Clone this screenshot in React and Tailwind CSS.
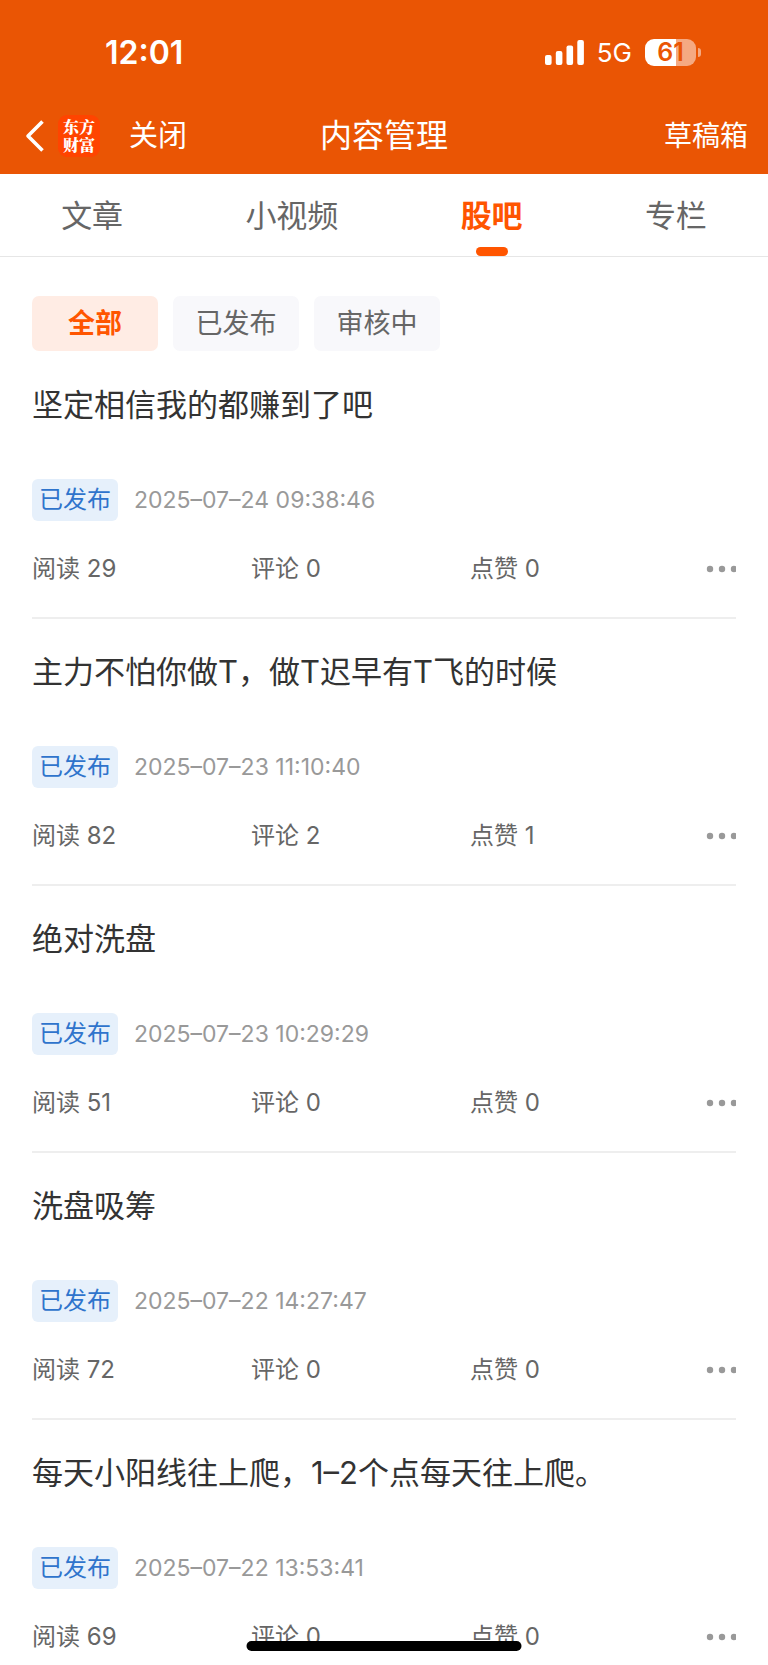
import React, { useState } from "react";

const TABS = ["文章", "小视频", "股吧", "专栏"];
const FILTERS = ["全部", "已发布", "审核中"];

const POSTS = [
  { title: "坚定相信我的都赚到了吧", time: "2025–07–24 09:38:46", reads: 29, comments: 0, likes: 0 },
  { title: "主力不怕你做T，做T迟早有T飞的时候", time: "2025–07–23 11:10:40", reads: 82, comments: 2, likes: 1 },
  { title: "绝对洗盘", time: "2025–07–23 10:29:29", reads: 51, comments: 0, likes: 0 },
  { title: "洗盘吸筹", time: "2025–07–22 14:27:47", reads: 72, comments: 0, likes: 0 },
  { title: "每天小阳线往上爬，1–2个点每天往上爬。", time: "2025–07–22 13:53:41", reads: 69, comments: 0, likes: 0 },
];

function SignalIcon() {
  return (
    <svg width="39" height="25" viewBox="0 0 39 25" fill="white" aria-hidden="true">
      <rect x="0" y="15" width="6.6" height="10" rx="2" />
      <rect x="10.8" y="11" width="6.6" height="14" rx="2" />
      <rect x="21.5" y="5.5" width="6.6" height="19.5" rx="2" />
      <rect x="32.3" y="0" width="6.6" height="25" rx="2" />
    </svg>
  );
}

function Battery() {
  return (
    <div className="flex items-center gap-[2px]">
      <div className="flex h-[27px] w-[51px] items-center justify-center rounded-[9px] bg-linear-to-r from-white from-61% to-[#f5a982] to-61% text-[25px] leading-none font-semibold text-[#ea5504]">
        61
      </div>
      <div className="h-[9px] w-[3px] rounded-r-full bg-[#f5a982]" />
    </div>
  );
}

function StatusBar() {
  return (
    <div className="flex h-[105px] items-center justify-between pr-[67px] pl-[105px]">
      <span className="text-[32px] leading-10 font-semibold">12:01</span>
      <div className="flex items-center gap-[13px]">
        <SignalIcon />
        <span className="text-[26px] leading-8">5G</span>
        <Battery />
      </div>
    </div>
  );
}

function NavBar() {
  return (
    <div className="grid h-[69px] grid-cols-[1fr_auto_1fr] items-center px-5 pb-2">
      <div className="flex items-center">
        <button type="button" aria-label="返回" className="pl-1">
          <svg width="20" height="32" viewBox="0 0 20 32" fill="none" stroke="white" strokeWidth="3.6" aria-hidden="true">
            <path d="M18.5 1.5 4 16 18.5 30.5" strokeLinejoin="round" />
          </svg>
        </button>
        <div className="ml-[14px] flex size-[42px] items-center justify-center rounded-[9px] bg-[#ff4400]">
          <span className="w-8 font-['Noto_Serif_CJK_SC','Noto_Sans_CJK_SC',serif] text-[16px] leading-[18px] font-black break-all">
            东方财富
          </span>
        </div>
        <button type="button" className="ml-[29px] text-[29px] leading-10">关闭</button>
      </div>
      <h1 className="text-[32px] leading-10">内容管理</h1>
      <button type="button" className="justify-self-end text-[28px] leading-10">草稿箱</button>
    </div>
  );
}

function Tabs({ active, onSelect }) {
  return (
    <nav className="flex h-[83px] shrink-0 justify-around border-b border-[#e6e6e6]">
      {TABS.map((tab) => (
        <button
          key={tab}
          type="button"
          onClick={() => onSelect(tab)}
          className={
            "relative h-full text-[31px] leading-[84px] " +
            (tab === active ? "font-bold text-[#ff5500]" : "text-[#666666]")
          }
        >
          {tab}
          {tab === active && (
            <span className="absolute bottom-0 left-1/2 h-[9px] w-8 -translate-x-1/2 rounded-full bg-[#ff5500]" />
          )}
        </button>
      ))}
    </nav>
  );
}

function Filters({ active, onSelect }) {
  return (
    <div className="flex gap-[15px] pt-[39px]">
      {FILTERS.map((filter) => (
        <button
          key={filter}
          type="button"
          onClick={() => onSelect(filter)}
          className={
            "h-[55px] w-[126px] rounded-[7px] text-[27px] leading-[55px] " +
            (filter === active ? "bg-[#ffece4] font-bold text-[#ff5500]" : "bg-[#f8f8fb] text-[#666666]")
          }
        >
          {filter}
        </button>
      ))}
    </div>
  );
}

function Post({ post }) {
  return (
    <li className="border-b-2 border-[#eeeeee] pt-[31px] pb-8">
      <h2 className="text-[31px] leading-[44px] text-[#333333]">{post.title}</h2>
      <div className="mt-[52px] flex items-center gap-4 leading-[42px]">
        <span className="rounded-[6px] bg-[#e6f0fb] px-[7px] text-[24px] text-[#2f74cc]">已发布</span>
        <time className="text-[23px] text-[#999999]">{post.time}</time>
      </div>
      <div className="mt-8 grid grid-cols-[14fr_14fr_14fr_3fr] items-center text-[24px] leading-8 text-[#666666]">
        <span>阅读 {post.reads}</span>
        <span>评论 {post.comments}</span>
        <span>点赞 {post.likes}</span>
        <button type="button" aria-label="更多" className="justify-self-end">
          <svg width="30" height="8" viewBox="0 0 30 8" fill="#999999" aria-hidden="true">
            <circle cx="4" cy="4" r="3.2" />
            <circle cx="16" cy="4" r="3.2" />
            <circle cx="28" cy="4" r="3.2" />
          </svg>
        </button>
      </div>
    </li>
  );
}

export default function App() {
  const [tab, setTab] = useState("股吧");
  const [filter, setFilter] = useState("全部");

  return (
    <div className="relative flex h-screen flex-col overflow-hidden bg-white font-[Inter,'Noto_Sans_CJK_SC',sans-serif]">
      <header className="shrink-0 bg-[#ea5504] text-white">
        <StatusBar />
        <NavBar />
      </header>
      <Tabs active={tab} onSelect={setTab} />
      <main className="min-h-0 flex-1 overflow-y-auto px-8 [scrollbar-width:none]">
        <Filters active={filter} onSelect={setFilter} />
        <ul className="pt-px">
          {POSTS.map((post) => (
            <Post key={post.time} post={post} />
          ))}
        </ul>
      </main>
      <div className="absolute bottom-[14px] left-1/2 h-[10px] w-[275px] -translate-x-1/2 rounded-full bg-black" />
    </div>
  );
}
